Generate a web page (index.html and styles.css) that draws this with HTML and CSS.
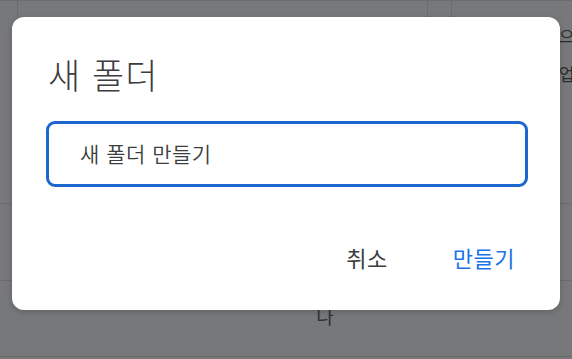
FILE: index.html
```html
<!DOCTYPE html>
<html lang="ko">
<head>
<meta charset="utf-8">
<title>새 폴더</title>
<link rel="stylesheet" href="styles.css">
</head>
<body>
<div class="page">
  <div class="row row-top">
    <div class="cell c-left"></div>
    <div class="cell c-mid"></div>
    <div class="cell c-gap"></div>
    <div class="cell c-right"><span class="peek peek-a">으</span><span class="peek peek-b">업</span></div>
  </div>
  <div class="row row-b"></div>
  <div class="row row-c"><span class="under">나</span></div>
  <div class="row row-d"></div>
</div>
<div class="dialog">
  <h1 class="title">새 폴더</h1>
  <div class="field">새 폴더 만들기</div>
  <div class="actions">
    <button class="btn btn-cancel">취소</button>
    <button class="btn btn-ok">만들기</button>
  </div>
</div>
</body>
</html>
```
FILE: styles.css
```css
* { box-sizing: border-box; }
html, body {
  margin: 0;
  padding: 0;
  width: 572px;
  height: 359px;
  overflow: hidden;
  background: #77787a;
  font-family: "Noto Sans CJK KR", "Noto Sans", sans-serif;
}
.page {
  width: 572px;
  height: 359px;
  display: flex;
  flex-direction: column;
}
.row {
  border-bottom: 1px solid #6b6c6e;
}
.row-top {
  height: 204px;
  display: flex;
  padding-left: 17px;
  border-top: 1px solid #6b6c6e;
}
.cell { height: 100%; }
.c-left { width: 0; }
.c-mid { width: 411px; border-left: 1px solid #6b6c6e; border-right: 1px solid #6b6c6e; }
.c-gap { width: 24px; border-right: 1px solid #6b6c6e; }
.c-right { flex: 1; position: relative; }
.peek {
  position: absolute;
  left: 107px;
  font-size: 17px;
  color: #2b2c2e;
  line-height: 1;
}
.peek-a { top: 26px; }
.peek-b { top: 64px; }
.row-b { height: 77px; }
.row-c { height: 76px; display: flex; justify-content: center; }
.under {
  font-size: 19px;
  color: #2f3033;
  margin-top: 25px;
  margin-left: 78px;
  line-height: 1;
}
.row-d { flex: 1; border-bottom: none; }

.dialog {
  position: absolute;
  left: 12px;
  top: 17px;
  width: 548px;
  height: 293px;
  background: #fff;
  border-radius: 12px;
  box-shadow: 0 2px 6px rgba(0,0,0,0.18);
  padding: 35px 32px 0 34px;
  display: flex;
  flex-direction: column;
}
.title {
  margin: 0 0 0 2px;
  font-weight: 300;
  font-size: 35px;
  line-height: 44px;
  letter-spacing: 1px;
  color: #3c3d40;
}
.field {
  margin-top: 25px;
  height: 66px;
  border: 3px solid #1b66cf;
  border-radius: 9px;
  padding: 0 0 3px 31px;
  display: flex;
  align-items: center;
  font-size: 21px;
  font-weight: 350;
  letter-spacing: 0.5px;
  color: #3c3d40;
}
.actions {
  margin-top: 56px;
  display: flex;
  justify-content: flex-end;
  gap: 62px;
  padding-right: 13px;
}
.btn {
  background: none;
  border: none;
  padding: 0;
  font-family: inherit;
  font-size: 22px;
  line-height: 28px;
  letter-spacing: 0.5px;
}
.btn-cancel { color: #3c3d40; margin-right: 3px; }
.btn-ok { color: #1a73e8; }
```
